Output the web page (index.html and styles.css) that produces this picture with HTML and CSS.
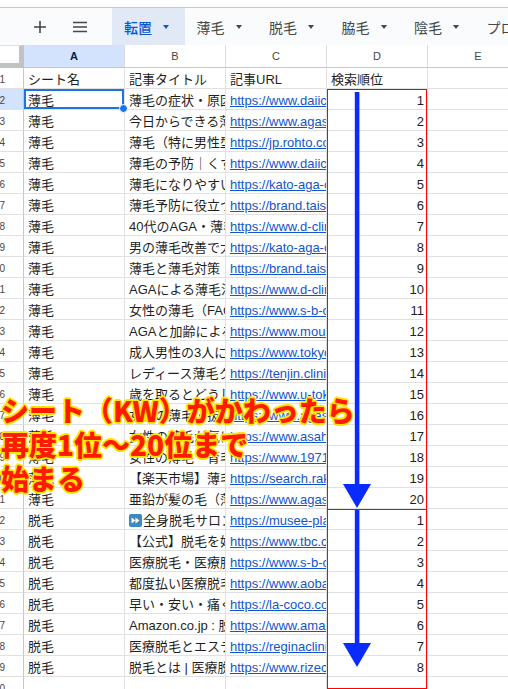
FILE: index.html
```html
<!DOCTYPE html>
<html lang="ja">
<head>
<meta charset="utf-8">
<link rel="stylesheet" href="styles.css">
</head>
<body>
<div class="topstrip"></div>
<div class="tabbar">
  <div class="iconbtn plus"><svg width="14" height="14" viewBox="0 0 14 14"><path d="M7 1v12M1 7h12" stroke="#444746" stroke-width="1.6" fill="none"/></svg></div>
  <div class="iconbtn menu"><svg width="16" height="12" viewBox="0 0 16 12"><path d="M1 1.5h14M1 6h14M1 10.5h14" stroke="#444746" stroke-width="1.6" fill="none"/></svg></div>
  <div class="tab active"><span>転置</span><i class="caret"></i></div>
  <div class="tab"><span>薄毛</span><i class="caret"></i></div>
  <div class="tab"><span>脱毛</span><i class="caret"></i></div>
  <div class="tab"><span>脇毛</span><i class="caret"></i></div>
  <div class="tab"><span>陰毛</span><i class="caret"></i></div>
  <div class="tab"><span>プロフィール</span><i class="caret"></i></div>
</div>
<div class="sheet">
  <div class="corner"></div>
  <div class="colhead sel">A</div>
  <div class="colhead">B</div>
  <div class="colhead">C</div>
  <div class="colhead">D</div>
  <div class="colhead">E</div>

  <div class="rh">1</div><div class="c">シート名</div><div class="c">記事タイトル</div><div class="c">記事URL</div><div class="c">検索順位</div><div class="c"></div>
  <div class="rh sel">2</div><div class="c active">薄毛</div><div class="c">薄毛の症状・原因・治療</div><div class="c"><a>https://www.daiichisankyo-hc.co.jp</a></div><div class="c n">1</div><div class="c"></div>
  <div class="rh">3</div><div class="c">薄毛</div><div class="c">今日からできる薄毛対策</div><div class="c"><a>https://www.agaskin.net</a></div><div class="c n">2</div><div class="c"></div>
  <div class="rh">4</div><div class="c">薄毛</div><div class="c">薄毛（特に男性型脱毛症）</div><div class="c"><a>https://jp.rohto.com/</a></div><div class="c n">3</div><div class="c"></div>
  <div class="rh">5</div><div class="c">薄毛</div><div class="c">薄毛の予防｜くすりと健康</div><div class="c"><a>https://www.daiichisankyo-hc.co.jp</a></div><div class="c n">4</div><div class="c"></div>
  <div class="rh">6</div><div class="c">薄毛</div><div class="c">薄毛になりやすい人の特徴</div><div class="c"><a>https://kato-aga-clinic.com</a></div><div class="c n">5</div><div class="c"></div>
  <div class="rh">7</div><div class="c">薄毛</div><div class="c">薄毛予防に役立つ食べ物</div><div class="c"><a>https://brand.taisho.co.jp</a></div><div class="c n">6</div><div class="c"></div>
  <div class="rh">8</div><div class="c">薄毛</div><div class="c">40代のAGA・薄毛の原因</div><div class="c"><a>https://www.d-clinicgroup.jp</a></div><div class="c n">7</div><div class="c"></div>
  <div class="rh">9</div><div class="c">薄毛</div><div class="c">男の薄毛改善で大切なこと</div><div class="c"><a>https://kato-aga-clinic.com</a></div><div class="c n">8</div><div class="c"></div>
  <div class="rh">10</div><div class="c">薄毛</div><div class="c">薄毛と薄毛対策</div><div class="c"><a>https://brand.taisho.co.jp</a></div><div class="c n">9</div><div class="c"></div>
  <div class="rh">11</div><div class="c">薄毛</div><div class="c">AGAによる薄毛治療</div><div class="c"><a>https://www.d-clinicgroup.jp</a></div><div class="c n">10</div><div class="c"></div>
  <div class="rh">12</div><div class="c">薄毛</div><div class="c">女性の薄毛（FAGA）</div><div class="c"><a>https://www.s-b-c.net</a></div><div class="c n">11</div><div class="c"></div>
  <div class="rh">13</div><div class="c">薄毛</div><div class="c">AGAと加齢による薄毛</div><div class="c"><a>https://www.mouhatsu.jp</a></div><div class="c n">12</div><div class="c"></div>
  <div class="rh">14</div><div class="c">薄毛</div><div class="c">成人男性の3人に1人</div><div class="c"><a>https://www.tokyo-aga.jp</a></div><div class="c n">13</div><div class="c"></div>
  <div class="rh">15</div><div class="c">薄毛</div><div class="c">レディース薄毛クリニック</div><div class="c"><a>https://tenjin.clinic/</a></div><div class="c n">14</div><div class="c"></div>
  <div class="rh">16</div><div class="c">薄毛</div><div class="c">歳を取るとどうして薄毛に</div><div class="c"><a>https://www.u-tokyo.ac.jp</a></div><div class="c n">15</div><div class="c"></div>
  <div class="rh">17</div><div class="c">薄毛</div><div class="c">女性の薄毛・抜け毛</div><div class="c"><a>https://www.agaskin.net</a></div><div class="c n">16</div><div class="c"></div>
  <div class="rh">18</div><div class="c">薄毛</div><div class="c">女性の薄毛が気になる</div><div class="c"><a>https://www.asahi.com</a></div><div class="c n">17</div><div class="c"></div>
  <div class="rh">19</div><div class="c">薄毛</div><div class="c">女性の薄毛・育毛剤</div><div class="c"><a>https://www.1971.jp</a></div><div class="c n">18</div><div class="c"></div>
  <div class="rh">20</div><div class="c">薄毛</div><div class="c">【楽天市場】薄毛</div><div class="c"><a>https://search.rakuten.co.jp</a></div><div class="c n">19</div><div class="c"></div>
  <div class="rh">21</div><div class="c">薄毛</div><div class="c">亜鉛が髪の毛（薄毛）</div><div class="c"><a>https://www.agaskin.net</a></div><div class="c n">20</div><div class="c"></div>
  <div class="rh">22</div><div class="c">脱毛</div><div class="c"><svg class="emoji" width="13" height="13" viewBox="0 0 13 13"><rect x="0" y="0" width="13" height="13" rx="2" fill="#3b88c3"/><path d="M2.5 3.5L6.5 6.5L2.5 9.5Z M6.5 3.5L10.5 6.5L6.5 9.5Z" fill="#fff"/></svg>全身脱毛サロン</div><div class="c"><a>https://musee-platinum.jp</a></div><div class="c n">1</div><div class="c"></div>
  <div class="rh">23</div><div class="c">脱毛</div><div class="c">【公式】脱毛を始めるなら</div><div class="c"><a>https://www.tbc.co.jp</a></div><div class="c n">2</div><div class="c"></div>
  <div class="rh">24</div><div class="c">脱毛</div><div class="c">医療脱毛・医療脱毛</div><div class="c"><a>https://www.s-b-c.net</a></div><div class="c n">3</div><div class="c"></div>
  <div class="rh">25</div><div class="c">脱毛</div><div class="c">都度払い医療脱毛</div><div class="c"><a>https://www.aoba-clinic.jp</a></div><div class="c n">4</div><div class="c"></div>
  <div class="rh">26</div><div class="c">脱毛</div><div class="c">早い・安い・痛くない</div><div class="c"><a>https://la-coco.com</a></div><div class="c n">5</div><div class="c"></div>
  <div class="rh">27</div><div class="c">脱毛</div><div class="c">Amazon.co.jp : 脱毛</div><div class="c"><a>https://www.amazon.co.jp</a></div><div class="c n">6</div><div class="c"></div>
  <div class="rh">28</div><div class="c">脱毛</div><div class="c">医療脱毛とエステ脱毛</div><div class="c"><a>https://reginaclinic.jp</a></div><div class="c n">7</div><div class="c"></div>
  <div class="rh">29</div><div class="c">脱毛</div><div class="c">脱毛とは | 医療脱毛</div><div class="c"><a>https://www.rizeclinic.com</a></div><div class="c n">8</div><div class="c"></div>
  <div class="rh">30</div><div class="c"></div><div class="c"></div><div class="c"></div><div class="c"></div><div class="c"></div>
</div>

<div class="redbox box1"></div>
<div class="redbox box2"></div>
<svg class="arrows" width="508" height="689" viewBox="0 0 508 689">
  <rect x="354.8" y="92" width="4.6" height="394" fill="#0a2bff"/>
  <polygon points="343,484 371,484 357,508" fill="#0a2bff"/>
  <rect x="354.8" y="510" width="4.6" height="135" fill="#0a2bff"/>
  <polygon points="343,643 371,643 357,667" fill="#0a2bff"/>
</svg>
<div class="note">シート（KW）がかわったら<br>再度1位〜20位まで<br>始まる</div>
</body>
</html>
```
FILE: styles.css
```css
html, body {
  margin: 0;
  padding: 0;
  background: #ffffff;
  overflow: hidden;
  width: 508px;
  height: 689px;
}
body {
  font-family: "Liberation Sans", Arial, "Noto Sans CJK JP", sans-serif;
  color: #1f1f1f;
  position: relative;
}
.topstrip {
  height: 7px;
  border-bottom: 1px solid #c7c7c7;
  background: #ffffff;
}
.tabbar {
  height: 37px;
  background: #f9fbfd;
  display: flex;
  align-items: stretch;
  padding-left: 26px;
  white-space: nowrap;
  overflow: hidden;
}
.iconbtn {
  flex: none;
  width: 28px;
  display: flex;
  align-items: center;
  justify-content: center;
}
.iconbtn.plus {
  margin-right: 12px;
}
.iconbtn.menu {
  margin-right: 18px;
}
.tab {
  flex: 0 0 72.5px;
  box-sizing: border-box;
  padding-left: 12px;
  display: flex;
  align-items: center;
  font-family: "Noto Sans CJK JP", sans-serif;
  font-size: 14px;
  color: #444746;
}
.tab span {
  flex: none;
  min-width: 28px;
}
.tab .caret {
  flex: none;
  display: inline-block;
  margin-left: 11px;
  width: 0;
  height: 0;
  border-left: 3.5px solid transparent;
  border-right: 3.5px solid transparent;
  border-top: 4px solid #444746;
}
.tab.active {
  background: #e1e9f7;
  color: #0b57d0;
  font-weight: 500;
}
.tab.active .caret {
  border-top-color: #0b57d0;
}
.sheet {
  display: grid;
  grid-template-columns: 24px 101px 101px 101px 101px 101px;
  grid-auto-rows: 21px;
  grid-template-rows: 23px;
  width: 529px;
}
.corner {
  box-sizing: border-box;
  border-right: 5px solid #c2c2c2;
  border-bottom: 5px solid #c2c2c2;
  border-top: 1px solid #e1e1e1;
  background: #ffffff;
}
.colhead {
  box-sizing: border-box;
  border-right: 1px solid #dadce0;
  border-bottom: 1px solid #c7c7c7;
  font-size: 11px;
  color: #444746;
  display: flex;
  align-items: center;
  justify-content: center;
  background: #ffffff;
}
.colhead.sel {
  background: #d3e3fd;
  color: #041e49;
  font-weight: bold;
}
.rh {
  box-sizing: border-box;
  border-right: 1px solid #c7c7c7;
  border-bottom: 1px solid #e1e1e1;
  font-size: 10px;
  color: #444746;
  direction: rtl;
  text-align: right;
  padding-right: 18px;
  padding-top: 3px;
  line-height: 17px;
  overflow: hidden;
  white-space: nowrap;
}
.rh.sel {
  background: #d3e3fd;
}
.c {
  box-sizing: border-box;
  border-right: 1px solid #e1e1e1;
  border-bottom: 1px solid #e1e1e1;
  font-size: 13px;
  line-height: 17px;
  padding: 3px 3px 0 4px;
  overflow: hidden;
  white-space: nowrap;
  position: relative;
}
.c a {
  color: #1155cc;
  text-decoration: underline;
}
.c.n {
  text-align: right;
}
.c.active {
  box-shadow: inset 0 0 0 2px #1a73e8;
  overflow: visible;
  z-index: 2;
}
.c.active::after {
  content: "";
  position: absolute;
  right: -4px;
  bottom: -4px;
  width: 7px;
  height: 7px;
  border-radius: 50%;
  background: #1a73e8;
  border: 1px solid #ffffff;
}
.emoji {
  vertical-align: -2px;
  margin-right: 1px;
}
.redbox {
  position: absolute;
  left: 326.5px;
  width: 100px;
  box-sizing: border-box;
  border: 1.5px solid #ff0000;
  z-index: 3;
}
.box1 {
  top: 89px;
  height: 421px;
}
.box2 {
  top: 508.5px;
  height: 180px;
}
.arrows {
  position: absolute;
  left: 0;
  top: 0;
  z-index: 4;
}
.note {
  position: absolute;
  left: 1px;
  top: 393px;
  z-index: 5;
  font-family: "Noto Sans CJK JP", sans-serif;
  font-weight: 900;
  font-size: 28px;
  line-height: 34px;
  color: #ff1a00;
  white-space: nowrap;
  text-shadow:
    1.6px 0 0 #ffe600, -1.6px 0 0 #ffe600, 0 1.6px 0 #ffe600, 0 -1.6px 0 #ffe600,
    1.2px 1.2px 0 #ffe600, -1.2px 1.2px 0 #ffe600, 1.2px -1.2px 0 #ffe600, -1.2px -1.2px 0 #ffe600;
}
```
